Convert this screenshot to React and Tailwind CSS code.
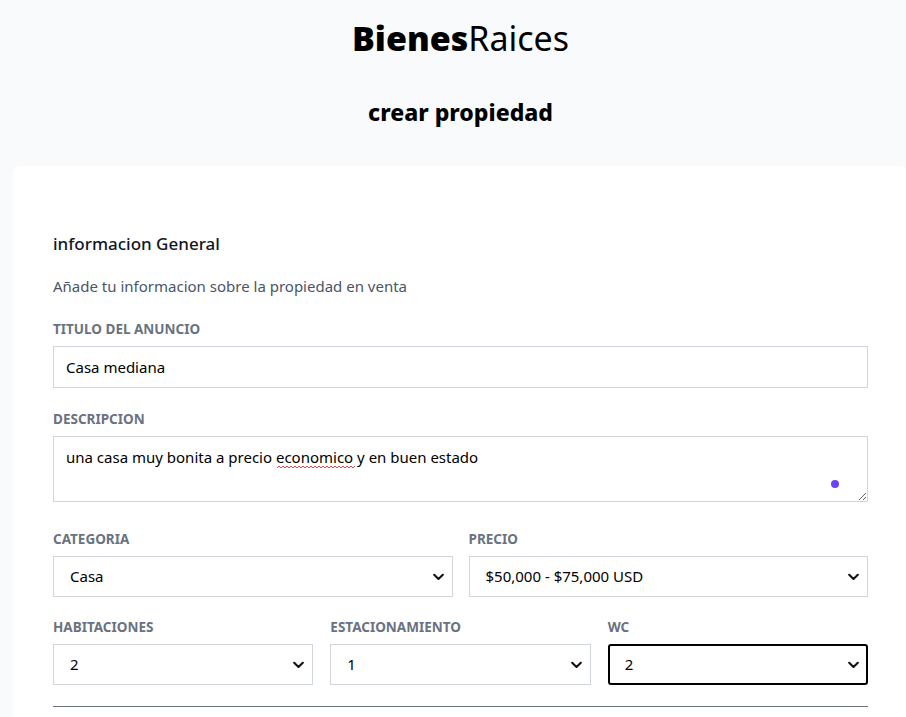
import React, { useState } from 'react';

const font = { fontFamily: '"Noto Sans", "Open Sans", sans-serif' };

const Chevron = () => (
    <svg className="pointer-events-none absolute right-[9px] top-1/2 -translate-y-1/2" width="11" height="7" viewBox="0 0 11 7" fill="none">
        <path d="M1.2 1.2 L5.5 5.4 L9.8 1.2" stroke="#111" strokeWidth="2.1" strokeLinecap="round" strokeLinejoin="round" />
    </svg>
);

const Select = ({ value, options, focused }) => (
    <div className="relative">
        <select
            defaultValue={value}
            className={
                focused
                    ? 'block w-full h-[41px] appearance-none rounded-[3px] border-2 border-black bg-white pl-[15px] pr-8 text-[15px] text-black outline-none'
                    : 'block w-full h-[41px] appearance-none border border-gray-300 bg-white pl-[16px] pr-8 text-[15px] text-black outline-none'
            }
        >
            {options.map((o) => (
                <option key={o}>{o}</option>
            ))}
        </select>
        <Chevron />
    </div>
);

const Label = ({ children }) => (
    <label className="block text-[13.5px] font-bold uppercase text-gray-500 leading-5 mb-[7px]">{children}</label>
);

// wavy spellcheck underline under "economico"
const Squiggle = () => (
    <svg className="pointer-events-none absolute left-[224px] top-[29px]" width="78" height="4" viewBox="0 0 78 4" fill="none">
        <path
            d="M0 3 L2 1 L4 3 L6 1 L8 3 L10 1 L12 3 L14 1 L16 3 L18 1 L20 3 L22 1 L24 3 L26 1 L28 3 L30 1 L32 3 L34 1 L36 3 L38 1 L40 3 L42 1 L44 3 L46 1 L48 3 L50 1 L52 3 L54 1 L56 3 L58 1 L60 3 L62 1 L64 3 L66 1 L68 3 L70 1 L72 3 L74 1 L76 3 L78 1"
            stroke="#e5484d"
            strokeWidth="1"
        />
    </svg>
);

export default function App() {
    const [titulo, setTitulo] = useState('Casa mediana');
    const [descripcion, setDescripcion] = useState('una casa muy bonita a precio economico y en buen estado');

    return (
        <div className="min-h-screen bg-gray-50 overflow-hidden" style={font}>
            <div className="w-[921px]">
                <header className="pt-[16px] text-center">
                    <h1 className="text-[34px] leading-[44px] text-black">
                        <span className="font-black">Bienes</span>
                        <span className="font-normal">Raices</span>
                    </h1>
                    <h2 className="mt-[36px] text-[23px] leading-8 font-extrabold text-black">crear propiedad</h2>
                </header>

                <main className="mt-[38px] mx-[13px] bg-white rounded-t-lg pt-[64px] px-10 pb-10">
                    <h3 className="text-[17px] leading-7 font-medium text-gray-900">informacion General</h3>
                    <p className="mt-[16px] text-[15px] leading-6 text-gray-600">Añade tu informacion sobre la propiedad en venta</p>

                    <div className="mt-[21px]">
                        <Label>Titulo del anuncio</Label>
                        <input
                            type="text"
                            value={titulo}
                            onChange={(e) => setTitulo(e.target.value)}
                            className="block w-full h-[42px] border border-gray-300 px-[12px] text-[15px] text-black outline-none"
                        />
                    </div>

                    <div className="mt-[21px]">
                        <Label>Descripcion</Label>
                        <div className="relative">
                            <textarea
                                value={descripcion}
                                onChange={(e) => setDescripcion(e.target.value)}
                                spellCheck={false}
                                className="block w-full h-[66px] border border-gray-300 px-[12px] pt-[8px] pb-[10px] text-[15px] leading-6 text-black outline-none resize-y"
                            />
                            <Squiggle />
                            <span className="absolute right-[29px] bottom-[14px] h-2 w-2 rounded-full bg-[#6b45f0]" />
                        </div>
                    </div>

                    <div className="mt-[27px] grid grid-cols-2 gap-4">
                        <div>
                            <Label>Categoria</Label>
                            <Select value="Casa" options={['Casa', 'Departamento', 'Terreno']} />
                        </div>
                        <div>
                            <Label>Precio</Label>
                            <Select value="$50,000 - $75,000 USD" options={['$0 - $50,000 USD', '$50,000 - $75,000 USD', '$75,000 - $100,000 USD']} />
                        </div>
                    </div>

                    <div className="mt-[20px] grid grid-cols-3 gap-[17px]">
                        <div>
                            <Label>Habitaciones</Label>
                            <Select value="2" options={['1', '2', '3', '4']} />
                        </div>
                        <div>
                            <Label>Estacionamiento</Label>
                            <Select value="1" options={['1', '2', '3', '4']} />
                        </div>
                        <div>
                            <Label>WC</Label>
                            <Select value="2" options={['1', '2', '3', '4']} focused />
                        </div>
                    </div>

                    <hr className="mt-[21px] border-t border-gray-500" />
                </main>
            </div>
        </div>
    );
}
